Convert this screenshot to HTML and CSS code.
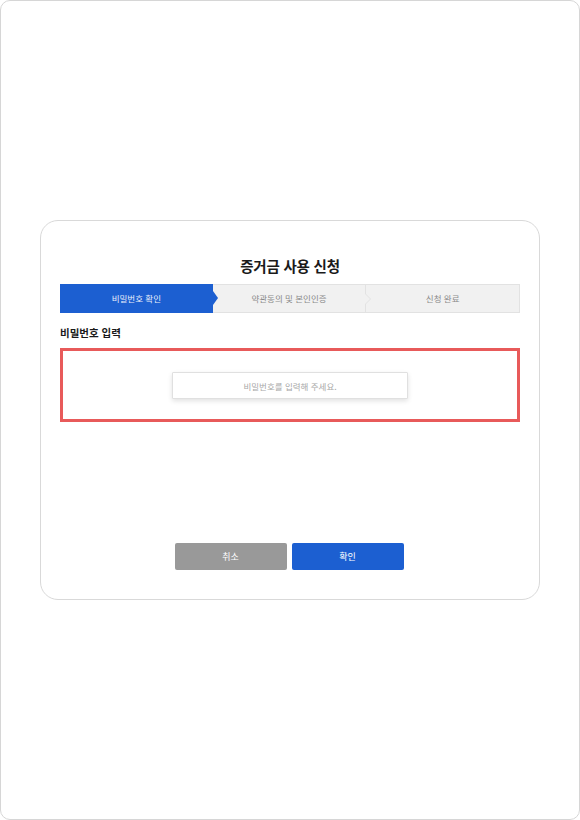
FILE: index.html
```html
<!DOCTYPE html>
<html lang="ko">
<head>
  <meta charset="UTF-8">
  <meta name="viewport" content="width=device-width, initial-scale=1.0">
  <title>증거금 사용 신청</title>
  <link rel="stylesheet" href="styles.css">
</head>
<body>
  <div class="screen">
    <!-- Modal -->
    <div class="modal">
      <h2 class="modal-title">증거금 사용 신청</h2>

      <ul class="steps">
        <li class="step active">비밀번호 확인</li>
        <li class="step">약관동의 및 본인인증</li>
        <li class="step">신청 완료</li>
      </ul>

      <h3 class="section-label">비밀번호 입력</h3>
      <div class="pw-box">
        <input type="password" class="pw-input" placeholder="비밀번호를 입력해 주세요.">
      </div>

      <div class="buttons">
        <button class="btn btn-cancel">취소</button>
        <button class="btn btn-ok">확인</button>
      </div>
    </div>
  </div>
</body>
</html>
```

FILE: styles.css
```css
html, body {
  margin: 0;
  padding: 0;
}
body {
  font-family: "Noto Sans CJK KR", "Noto Sans", sans-serif;
  background: #fff;
  color: #111;
}
.screen {
  box-sizing: border-box;
  width: 580px;
  height: 820px;
  border: 1px solid #d6d6d6;
  border-radius: 10px;
  padding-top: 219px;
}
.modal {
  box-sizing: border-box;
  width: 500px;
  height: 380px;
  margin-left: 39px;
  border: 1px solid #d9d9d9;
  border-radius: 18px;
  padding: 0 19px;
  display: flex;
  flex-direction: column;
}
.modal-title {
  margin: 33px 0 0;
  height: 30px;
  font-size: 14.5px;
  font-weight: 700;
  line-height: 24px;
  text-align: center;
  letter-spacing: -0.2px;
  color: #1a1a1a;
}
.steps {
  list-style: none;
  margin: 0;
  padding: 0;
  display: flex;
  height: 29px;
}
.step {
  position: relative;
  flex: 1;
  box-sizing: border-box;
  background: #f1f1f1;
  border-top: 1px solid #e2e2e2;
  border-bottom: 1px solid #e2e2e2;
  font-size: 8.5px;
  line-height: 27px;
  text-align: center;
  color: #8a8a8a;
}
.step:last-child {
  border-right: 1px solid #e2e2e2;
}
/* chevron between steps */
.step:not(:last-child)::after {
  content: "";
  position: absolute;
  top: 8px;
  right: -6px;
  width: 0;
  height: 0;
  border-top: 6px solid transparent;
  border-bottom: 6px solid transparent;
  border-left: 6px solid #e2e2e2;
  z-index: 1;
}
.step:not(:last-child)::before {
  content: "";
  position: absolute;
  top: 9px;
  right: -5px;
  width: 0;
  height: 0;
  border-top: 5px solid transparent;
  border-bottom: 5px solid transparent;
  border-left: 5px solid #f1f1f1;
  z-index: 2;
}
.step.active {
  background: #1c5fd1;
  border-color: #1c5fd1;
  color: #e8eefb;
}
.step.active::after {
  top: 6px;
  right: -5px;
  border-top-width: 7px;
  border-bottom-width: 7px;
  border-left: 5px solid #1c5fd1;
}
.step.active::before {
  display: none;
}
.step + .step {
  border-left: 1px solid #e2e2e2;
}
.step.active + .step {
  border-left: none;
}
.section-label {
  margin: 12px 0 0;
  height: 23px;
  font-size: 10.5px;
  font-weight: 700;
  line-height: 16px;
  color: #1a1a1a;
}
.pw-box {
  box-sizing: border-box;
  height: 74px;
  border: 3px solid #e85a5a;
  display: flex;
  justify-content: center;
  padding-top: 21px;
}
.pw-input {
  box-sizing: border-box;
  width: 236px;
  height: 27px;
  border: 1px solid #e0e0e0;
  border-radius: 1px;
  box-shadow: 0 2px 5px rgba(0, 0, 0, 0.12);
  font-family: inherit;
  font-size: 8.5px;
  text-align: center;
  outline: none;
}
.pw-input::placeholder {
  color: #a8a8a8;
}
.buttons {
  display: flex;
  justify-content: center;
  gap: 5px;
  margin-top: 121px;
  padding-right: 2px;
}
.btn {
  width: 112px;
  height: 27px;
  border: none;
  border-radius: 2px;
  font-family: inherit;
  font-size: 9px;
  color: #fff;
  cursor: pointer;
}
.btn-cancel {
  background: #999;
}
.btn-ok {
  background: #1c5fd1;
}
```
